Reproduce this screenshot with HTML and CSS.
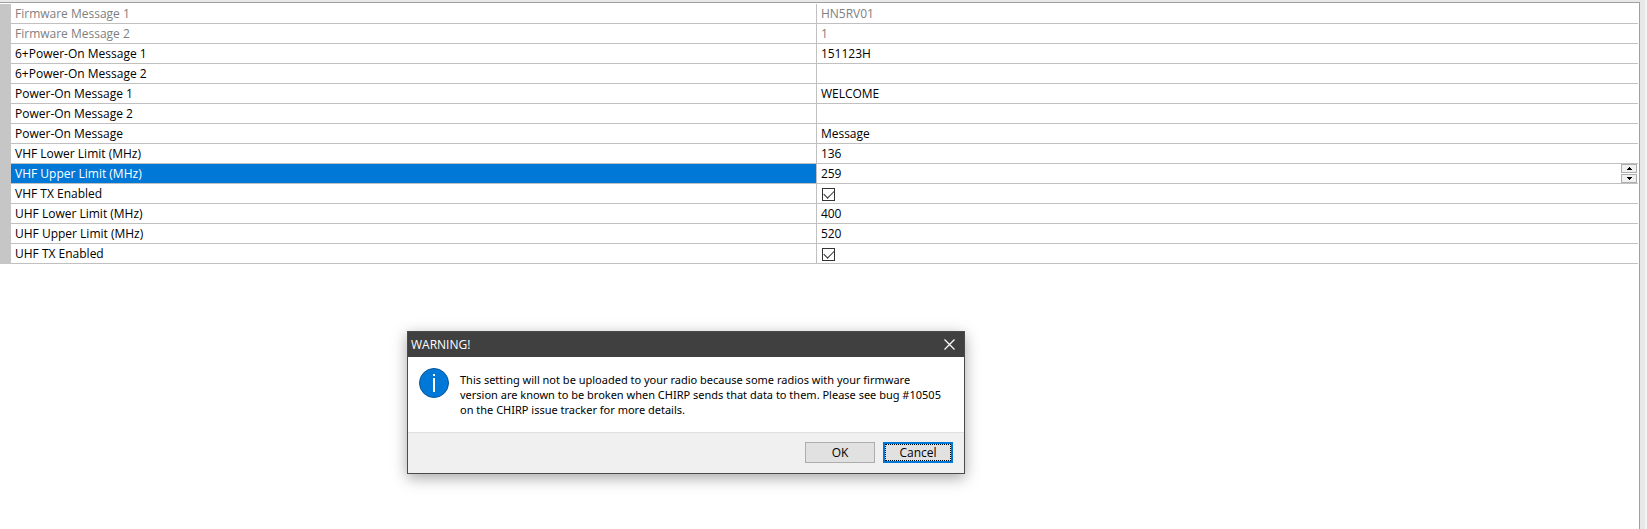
FILE: index.html
```
<!DOCTYPE html>
<html lang="en">
<head>
	<meta charset="UTF-8">
	<title>Settings</title>
	<link rel="stylesheet" href="styles.css">
</head>
<body>
	<div class="window">
		<div class="panel">
			<table class="grid">
				<colgroup>
					<col class="gutter">
					<col class="name">
					<col class="value">
				</colgroup>
				<tbody>
					<tr class="readonly">
						<td class="margin" rowspan="13"></td>
						<th scope="row">Firmware Message 1</th>
						<td>HN5RV01</td>
					</tr>
					<tr class="readonly">
						<th scope="row">Firmware Message 2</th>
						<td>1</td>
					</tr>
					<tr>
						<th scope="row">6+Power-On Message 1</th>
						<td>151123H</td>
					</tr>
					<tr>
						<th scope="row">6+Power-On Message 2</th>
						<td></td>
					</tr>
					<tr>
						<th scope="row">Power-On Message 1</th>
						<td>WELCOME</td>
					</tr>
					<tr>
						<th scope="row">Power-On Message 2</th>
						<td></td>
					</tr>
					<tr>
						<th scope="row">Power-On Message</th>
						<td>Message</td>
					</tr>
					<tr>
						<th scope="row">VHF Lower Limit (MHz)</th>
						<td>136</td>
					</tr>
					<tr class="selected">
						<th scope="row"><label for="vhf_upper">VHF Upper Limit (MHz)</label></th>
						<td>
							<div class="editor">
								<input type="text" id="vhf_upper" value="259">
								<div class="spin">
									<button type="button" aria-label="Increase"><svg width="5" height="3" viewBox="0 0 5 3"><path d="M2 0h1v1h1v1h1v1H0V2h1V1h1z"/></svg></button>
									<button type="button" aria-label="Decrease"><svg width="5" height="3" viewBox="0 0 5 3"><path d="M0 0h5v1H4v1H3v1H2V2H1V1H0z"/></svg></button>
								</div>
							</div>
						</td>
					</tr>
					<tr>
						<th scope="row"><label for="vhf_tx">VHF TX Enabled</label></th>
						<td><input type="checkbox" id="vhf_tx" checked></td>
					</tr>
					<tr>
						<th scope="row">UHF Lower Limit (MHz)</th>
						<td>400</td>
					</tr>
					<tr>
						<th scope="row">UHF Upper Limit (MHz)</th>
						<td>520</td>
					</tr>
					<tr>
						<th scope="row"><label for="uhf_tx">UHF TX Enabled</label></th>
						<td><input type="checkbox" id="uhf_tx" checked></td>
					</tr>
				</tbody>
			</table>
		</div>
	</div>

	<div class="dialog" role="dialog" aria-labelledby="dialog_title">
		<div class="titlebar">
			<span id="dialog_title">WARNING!</span>
			<button type="button" class="close" aria-label="Close">
				<svg width="11" height="11" viewBox="0 0 11 11"><path d="M.5.5l10 10M10.5.5l-10 10" fill="none" stroke="#fff" stroke-width="1.2"/></svg>
			</button>
		</div>
		<div class="content">
			<svg class="icon" width="30" height="30" viewBox="0 0 30 30">
				<circle cx="15" cy="15" r="14.5" fill="#0078d7" stroke="#0a5696"/>
				<path d="M14 10h2v14h-2zM14 6h2v2h-2z" fill="#fff"/>
			</svg>
			<p>This setting will not be uploaded to your radio because some radios with your firmware<br>version are known to be broken when CHIRP sends that data to them. Please see bug #10505<br>on the CHIRP issue tracker for more details.</p>
		</div>
		<div class="buttons">
			<button type="button">OK</button>
			<button type="button" class="focused">Cancel</button>
		</div>
	</div>
</body>
</html>
```
FILE: styles.css
```
*{padding:0;margin:0;box-sizing:border-box;}
	body{
		font-family: "Open Sans", "Noto Sans", sans-serif;
		font-size: 12px;
		color: #000;
		background: #fff;
	}
	button, input{
		font: inherit;
		color: inherit;
	}
	.window{
		min-height: 100vh;
		display: flex;
		padding: 2px 5px 0 0;
		background: #e8e8e8;
		border-right: 2px solid #f4f4f4;
	}
	.panel{
		flex: 1;
		padding: 1px 1px 0 0;
		background: #fff;
		border-top: 1px solid #a0a0a0;
		border-right: 1px solid #a0a0a0;
	}
	/* property grid */
	.grid{
		width: 100%;
		table-layout: fixed;
		border-collapse: separate;
		border-spacing: 0;
	}
	.gutter{
		width: 11px;
	}
	.name{
		width: 49.2%;
	}
	.margin{
		background: #c6c6c6;
	}
	.grid th, .grid td{
		height: 20px;
		line-height: 19px;
		padding: 0 4px;
		text-align: left;
		font-weight: normal;
		border-bottom: 1px solid #c0c0c0;
		white-space: nowrap;
	}
	.grid th{
		border-right: 1px solid #c0c0c0;
	}
	.grid .margin{
		border: 0;
	}
	.readonly{
		color: #808080;
	}
	.selected th{
		color: #fff;
		background: #0078d7;
	}
	.selected label{
		display: block;
	}
	.grid .selected td{
		padding-right: 1px;
	}
	.editor{
		display: flex;
		height: 19px;
	}
	.editor input{
		flex: 1;
		min-width: 0;
		border: 0;
		outline: 0;
		background: none;
	}
	.spin{
		display: flex;
		flex-direction: column;
		gap: 1px;
	}
	.spin button{
		display: flex;
		align-items: center;
		justify-content: center;
		width: 16px;
		height: 9px;
		background: #f0f0f0;
		border: 1px solid #adadad;
	}
	.grid input[type=checkbox]{
		appearance: none;
		display: block;
		width: 13px;
		height: 13px;
		margin: 1px 0 0 1px;
		border: 1px solid #333;
		background: #fff;
	}
	.grid input[type=checkbox]:checked::before{
		content: "";
		display: block;
		width: 9px;
		height: 5px;
		margin: 1px;
		border-left: 1px solid #333;
		border-bottom: 1px solid #333;
		transform: rotate(-45deg);
	}
	/* message box */
	.dialog{
		position: absolute;
		left: 407px;
		top: 331px;
		width: 558px;
		background: #fff;
		border: 1px solid #4a4a4a;
		box-shadow: 0 4px 14px rgba(0,0,0,.35);
	}
	.titlebar{
		display: flex;
		align-items: center;
		justify-content: space-between;
		height: 25px;
		padding: 0 9px 0 3px;
		color: #fff;
		background: #404040;
	}
	.close{
		display: flex;
		border: 0;
		background: none;
	}
	.content{
		display: flex;
		gap: 11px;
		padding: 11px 11px 14px;
	}
	.icon{
		flex: none;
	}
	.content p{
		padding: 4px 0 1px;
		font-family: "Noto Sans", "Open Sans", sans-serif;
		font-size: 11px;
		line-height: 15px;
		white-space: nowrap;
	}
	.buttons{
		display: flex;
		justify-content: flex-end;
		gap: 8px;
		padding: 9px 11px 10px;
		background: #f0f0f0;
		border-top: 1px solid #dfdfdf;
	}
	.buttons button{
		width: 70px;
		height: 21px;
		line-height: 17px;
		background: #e1e1e1;
		border: 1px solid #adadad;
	}
	.buttons .focused{
		border: 2px solid #0078d7;
		outline: 1px dotted #000;
		outline-offset: -3px;
	}
```
